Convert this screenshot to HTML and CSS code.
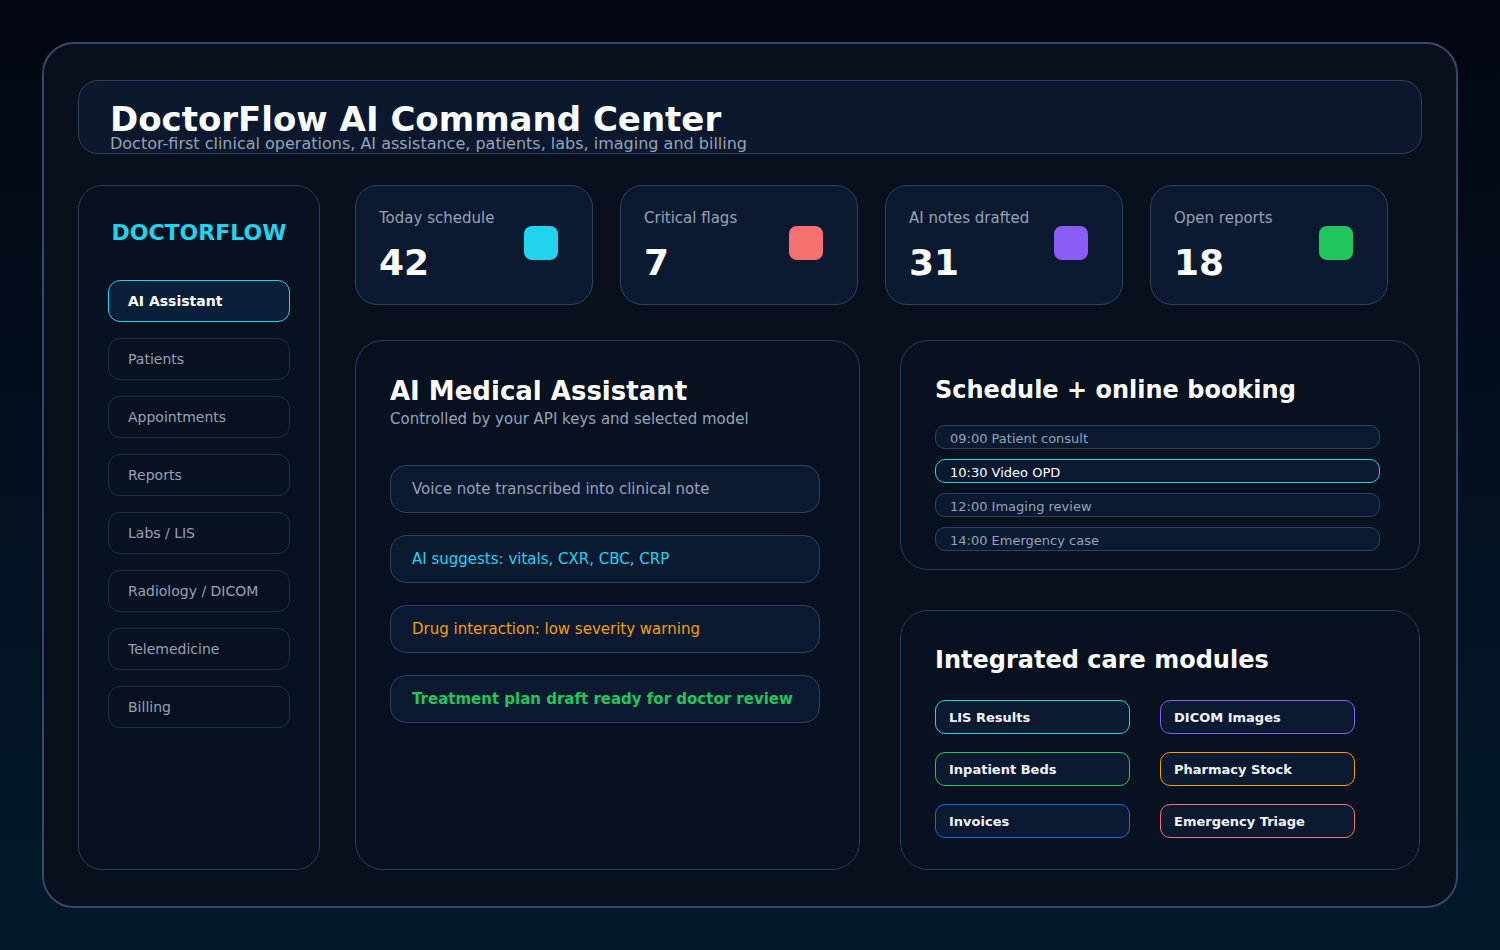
FILE: index.html
```html
<!DOCTYPE html>
<html>
<head>
    <title>DoctorFlow AI Command Center</title>
    <link rel="stylesheet" href="styles.css">
</head>
<body>
    <div class="frame">
        <header class="topbar">
            <h1>DoctorFlow AI Command Center</h1>
            <p>Doctor-first clinical operations, AI assistance, patients, labs, imaging and billing</p>
        </header>

        <div class="layout">
            <aside class="sidebar">
                <div class="brand">DOCTORFLOW</div>
                <nav class="nav">
                    <a class="nav-item active">AI Assistant</a>
                    <a class="nav-item">Patients</a>
                    <a class="nav-item">Appointments</a>
                    <a class="nav-item">Reports</a>
                    <a class="nav-item">Labs / LIS</a>
                    <a class="nav-item">Radiology / DICOM</a>
                    <a class="nav-item">Telemedicine</a>
                    <a class="nav-item">Billing</a>
                </nav>
            </aside>

            <main class="content">
                <section class="stats">
                    <div class="stat">
                        <div>
                            <div class="stat-label">Today schedule</div>
                            <div class="stat-value">42</div>
                        </div>
                        <span class="stat-dot cyan"></span>
                    </div>
                    <div class="stat">
                        <div>
                            <div class="stat-label">Critical flags</div>
                            <div class="stat-value">7</div>
                        </div>
                        <span class="stat-dot red"></span>
                    </div>
                    <div class="stat">
                        <div>
                            <div class="stat-label">AI notes drafted</div>
                            <div class="stat-value">31</div>
                        </div>
                        <span class="stat-dot purple"></span>
                    </div>
                    <div class="stat">
                        <div>
                            <div class="stat-label">Open reports</div>
                            <div class="stat-value">18</div>
                        </div>
                        <span class="stat-dot green"></span>
                    </div>
                </section>

                <section class="panels">
                    <div class="panel assistant">
                        <h2>AI Medical Assistant</h2>
                        <p class="panel-sub">Controlled by your API keys and selected model</p>
                        <div class="messages">
                            <div class="message">Voice note transcribed into clinical note</div>
                            <div class="message cyan-text">AI suggests: vitals, CXR, CBC, CRP</div>
                            <div class="message amber-text">Drug interaction: low severity warning</div>
                            <div class="message green-text">Treatment plan draft ready for doctor review</div>
                        </div>
                    </div>

                    <div class="side-panels">
                        <div class="panel schedule">
                            <h2>Schedule + online booking</h2>
                            <div class="slots">
                                <div class="slot">09:00 Patient consult</div>
                                <div class="slot active">10:30 Video OPD</div>
                                <div class="slot">12:00 Imaging review</div>
                                <div class="slot">14:00 Emergency case</div>
                            </div>
                        </div>

                        <div class="panel modules">
                            <h2>Integrated care modules</h2>
                            <div class="chips">
                                <div class="chip cyan">LIS Results</div>
                                <div class="chip purple">DICOM Images</div>
                                <div class="chip green">Inpatient Beds</div>
                                <div class="chip amber">Pharmacy Stock</div>
                                <div class="chip blue">Invoices</div>
                                <div class="chip red">Emergency Triage</div>
                            </div>
                        </div>
                    </div>
                </section>
            </main>
        </div>
    </div>
</body>
</html>
```

FILE: styles.css
```css
* {
    box-sizing: border-box;
}

body {
    margin: 0;
    height: 950px;
    overflow: hidden;
    background: linear-gradient(180deg, #020612 0%, #03101f 50%, #031a2c 100%);
    font-family: 'DejaVu Sans', Verdana, sans-serif;
    color: #f8fafc;
}

h1, h2, p {
    margin: 0;
}

.frame {
    margin: 42px;
    width: 1416px;
    height: 866px;
    padding: 36px 34px;
    background-color: #07101c;
    border: 2px solid #34496a;
    border-radius: 32px;
}

/* header strip */
.topbar {
    height: 74px;
    padding: 23px 31px 0;
    background-color: #0b182d;
    border: 1px solid #2d4262;
    border-radius: 20px;
}

.topbar h1 {
    font-size: 34px;
    line-height: 30px;
    font-weight: bold;
    color: #ffffff;
}

.topbar p {
    margin-top: 1px;
    font-size: 16px;
    line-height: 17px;
    color: #94a3b8;
}

.layout {
    margin-top: 31px;
    height: 685px;
    display: grid;
    grid-template-columns: 242px 1fr;
    gap: 35px;
}

/* sidebar */
.sidebar {
    padding: 34px 29px 0;
    background-color: #08111f;
    border: 1px solid #2a3d5b;
    border-radius: 24px;
}

.brand {
    text-align: center;
    font-size: 22px;
    line-height: 26px;
    font-weight: bold;
    color: #22d3ee;
    margin-bottom: 34px;
}

.nav {
    display: flex;
    flex-direction: column;
    gap: 16px;
}

.nav-item {
    display: block;
    height: 42px;
    padding-left: 19px;
    font-size: 14px;
    line-height: 40px;
    color: #94a3b8;
    border: 1px solid #1c2d48;
    border-radius: 12px;
    background-color: #08111f;
}

.nav-item.active {
    color: #ffffff;
    font-weight: bold;
    background-color: #0c1f3a;
    border-color: #22d3ee;
}

/* stat cards */
.stats {
    display: flex;
    gap: 27px;
}

.stat {
    width: 238px;
    height: 120px;
    display: flex;
    justify-content: space-between;
    align-items: flex-start;
    padding: 24px 34px 0 23px;
    background-color: #0b1a31;
    border: 1px solid #2d4262;
    border-radius: 22px;
}

.stat-label {
    font-size: 15px;
    line-height: 17px;
    color: #94a3b8;
}

.stat-value {
    margin-top: 16px;
    font-size: 36px;
    line-height: 40px;
    font-weight: bold;
    color: #ffffff;
}

.stat-dot {
    width: 34px;
    height: 34px;
    margin-top: 16px;
    border-radius: 8px;
}

.stat-dot.cyan { background-color: #22d3ee; }
.stat-dot.red { background-color: #f87171; }
.stat-dot.purple { background-color: #8b5cf6; }
.stat-dot.green { background-color: #22c55e; }

/* panels */
.panels {
    margin-top: 35px;
    height: 530px;
    display: grid;
    grid-template-columns: 505px 520px;
    gap: 40px;
}

.panel {
    padding: 35px 34px 0;
    background-color: #08111f;
    border: 1px solid #2a3d5b;
    border-radius: 28px;
}

.panel h2 {
    font-size: 24px;
    line-height: 28px;
    font-weight: bold;
    color: #ffffff;
}

.assistant h2 {
    font-size: 26px;
    line-height: 30px;
}

.panel-sub {
    margin-top: 4px;
    font-size: 15px;
    line-height: 18px;
    color: #94a3b8;
}

.messages {
    margin-top: 37px;
    display: flex;
    flex-direction: column;
    gap: 22px;
}

.message {
    width: 430px;
    height: 48px;
    padding-left: 21px;
    font-size: 15px;
    line-height: 46px;
    color: #94a3b8;
    background-color: #0b1a31;
    border: 1px solid #2d4262;
    border-radius: 16px;
}

.message.cyan-text { color: #22d3ee; }
.message.amber-text { color: #f59e0b; }
.message.green-text { color: #22c55e; font-weight: bold; }

.side-panels {
    display: flex;
    flex-direction: column;
    gap: 40px;
}

.schedule {
    height: 230px;
}

.slots {
    margin-top: 21px;
    display: flex;
    flex-direction: column;
    gap: 10px;
}

.slot {
    width: 445px;
    height: 24px;
    padding: 3px 0 0 14px;
    font-size: 13px;
    line-height: 19px;
    color: #94a3b8;
    background-color: #0b1a31;
    border: 1px solid #2d4262;
    border-radius: 10px;
}

.slot.active {
    color: #ffffff;
    border-color: #22d3ee;
}

.modules {
    height: 260px;
}

.chips {
    margin-top: 26px;
    display: grid;
    grid-template-columns: 195px 195px;
    column-gap: 30px;
    row-gap: 18px;
}

.chip {
    height: 34px;
    padding: 1px 0 0 13px;
    font-size: 13px;
    line-height: 31px;
    font-weight: bold;
    color: #f1f5f9;
    background-color: #0b1a31;
    border: 1px solid #2d4262;
    border-radius: 10px;
}

.chip.cyan { border-color: #22d3ee; }
.chip.purple { border-color: #8b5cf6; }
.chip.green { border-color: #22c55e; }
.chip.amber { border-color: #f59e0b; }
.chip.blue { border-color: #2563eb; }
.chip.red { border-color: #f87171; }
```
